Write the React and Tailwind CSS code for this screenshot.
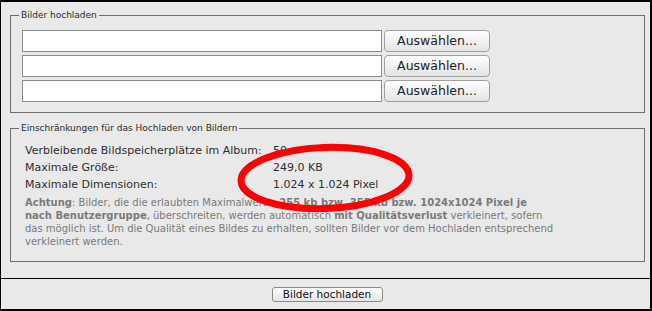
import React from "react";

const font = { fontFamily: '"DejaVu Sans", Verdana, sans-serif' };

function FileRow() {
  return (
    <div className="flex items-center">
      <input
        type="text"
        className="w-[360px] h-[22px] bg-white border border-[#8c8c8c] outline-none"
      />
      <button className="ml-[2px] w-[106px] h-[22px] rounded-[4px] border border-[#a0a0a0] bg-gradient-to-b from-[#ffffff] to-[#e4e4e4] text-[12.5px] text-[#222] leading-none">
        Auswählen...
      </button>
    </div>
  );
}

export default function App() {
  return (
    <div
      className="relative w-[652px] h-[311px] bg-[#e8e9e8] border-black border-l border-t-2 border-r-2 border-b-2 flex flex-col"
      style={font}
    >
      <div className="flex-1 pl-[9px] pr-[5px]">
        <fieldset className="mt-[7px] border border-[#6e6e6e] px-[8px] pt-[9px] pb-[10px]">
          <legend className="px-[2px] text-[9px] leading-[12px] text-[#2a2a2a]">
            Bilder hochladen
          </legend>
          <div className="ml-[3px] flex flex-col gap-[3px]">
            <FileRow />
            <FileRow />
            <FileRow />
          </div>
        </fieldset>

        <fieldset className="mt-[9px] border border-[#6e6e6e] px-[8px] pt-[9px] pb-[13px]">
          <legend className="px-[2px] text-[9px] leading-[12px] text-[#2a2a2a]">
            Einschränkungen für das Hochladen von Bildern
          </legend>
          <div className="ml-[6px]">
            <div className="flex h-[17px] items-center text-[11px] text-[#2e2e2e]">
              <span className="w-[248px] whitespace-nowrap">Verbleibende Bildspeicherplätze im Album:</span>
              <span>50</span>
            </div>
            <div className="flex h-[17px] items-center text-[11px] text-[#2e2e2e]">
              <span className="w-[248px]">Maximale Größe:</span>
              <span>249,0 KB</span>
            </div>
            <div className="flex h-[17px] items-center text-[11px] text-[#2e2e2e]">
              <span className="w-[248px]">Maximale Dimensionen:</span>
              <span>1.024 x 1.024 Pixel</span>
            </div>
            <p className="mt-[2px] text-[10px] leading-[13px] text-[#7a7a7a] whitespace-nowrap">
              <b>Achtung</b>: Bilder, die die erlaubten Maximalwerte, <b>255 kb bzw. 355 kb bzw. 1024x1024 Pixel je</b>
              <br />
              <b>nach Benutzergruppe</b>, überschreiten, werden automatisch <b>mit Qualitätsverlust</b> verkleinert, sofern
              <br />
              das möglich ist. Um die Qualität eines Bildes zu erhalten, sollten Bilder vor dem Hochladen entsprechend
              <br />
              verkleinert werden.
            </p>
          </div>
        </fieldset>
      </div>

      <div className="h-[31px] border-t border-black flex items-center justify-center">
        <button className="ml-[3px] w-[111px] h-[15px] rounded-[3px] border border-[#8a8a8a] bg-gradient-to-b from-[#ffffff] to-[#e4e4e4] text-[10.5px] leading-none text-[#111]">
          Bilder hochladen
        </button>
      </div>

      <svg
        className="absolute left-[232px] top-[139px] pointer-events-none"
        width="184"
        height="76"
        viewBox="0 0 184 76"
      >
        <ellipse
          cx="92"
          cy="37"
          rx="84"
          ry="30.5"
          fill="none"
          stroke="#ff0000"
          strokeWidth="7"
          transform="rotate(-2 92 37)"
        />
      </svg>
    </div>
  );
}
